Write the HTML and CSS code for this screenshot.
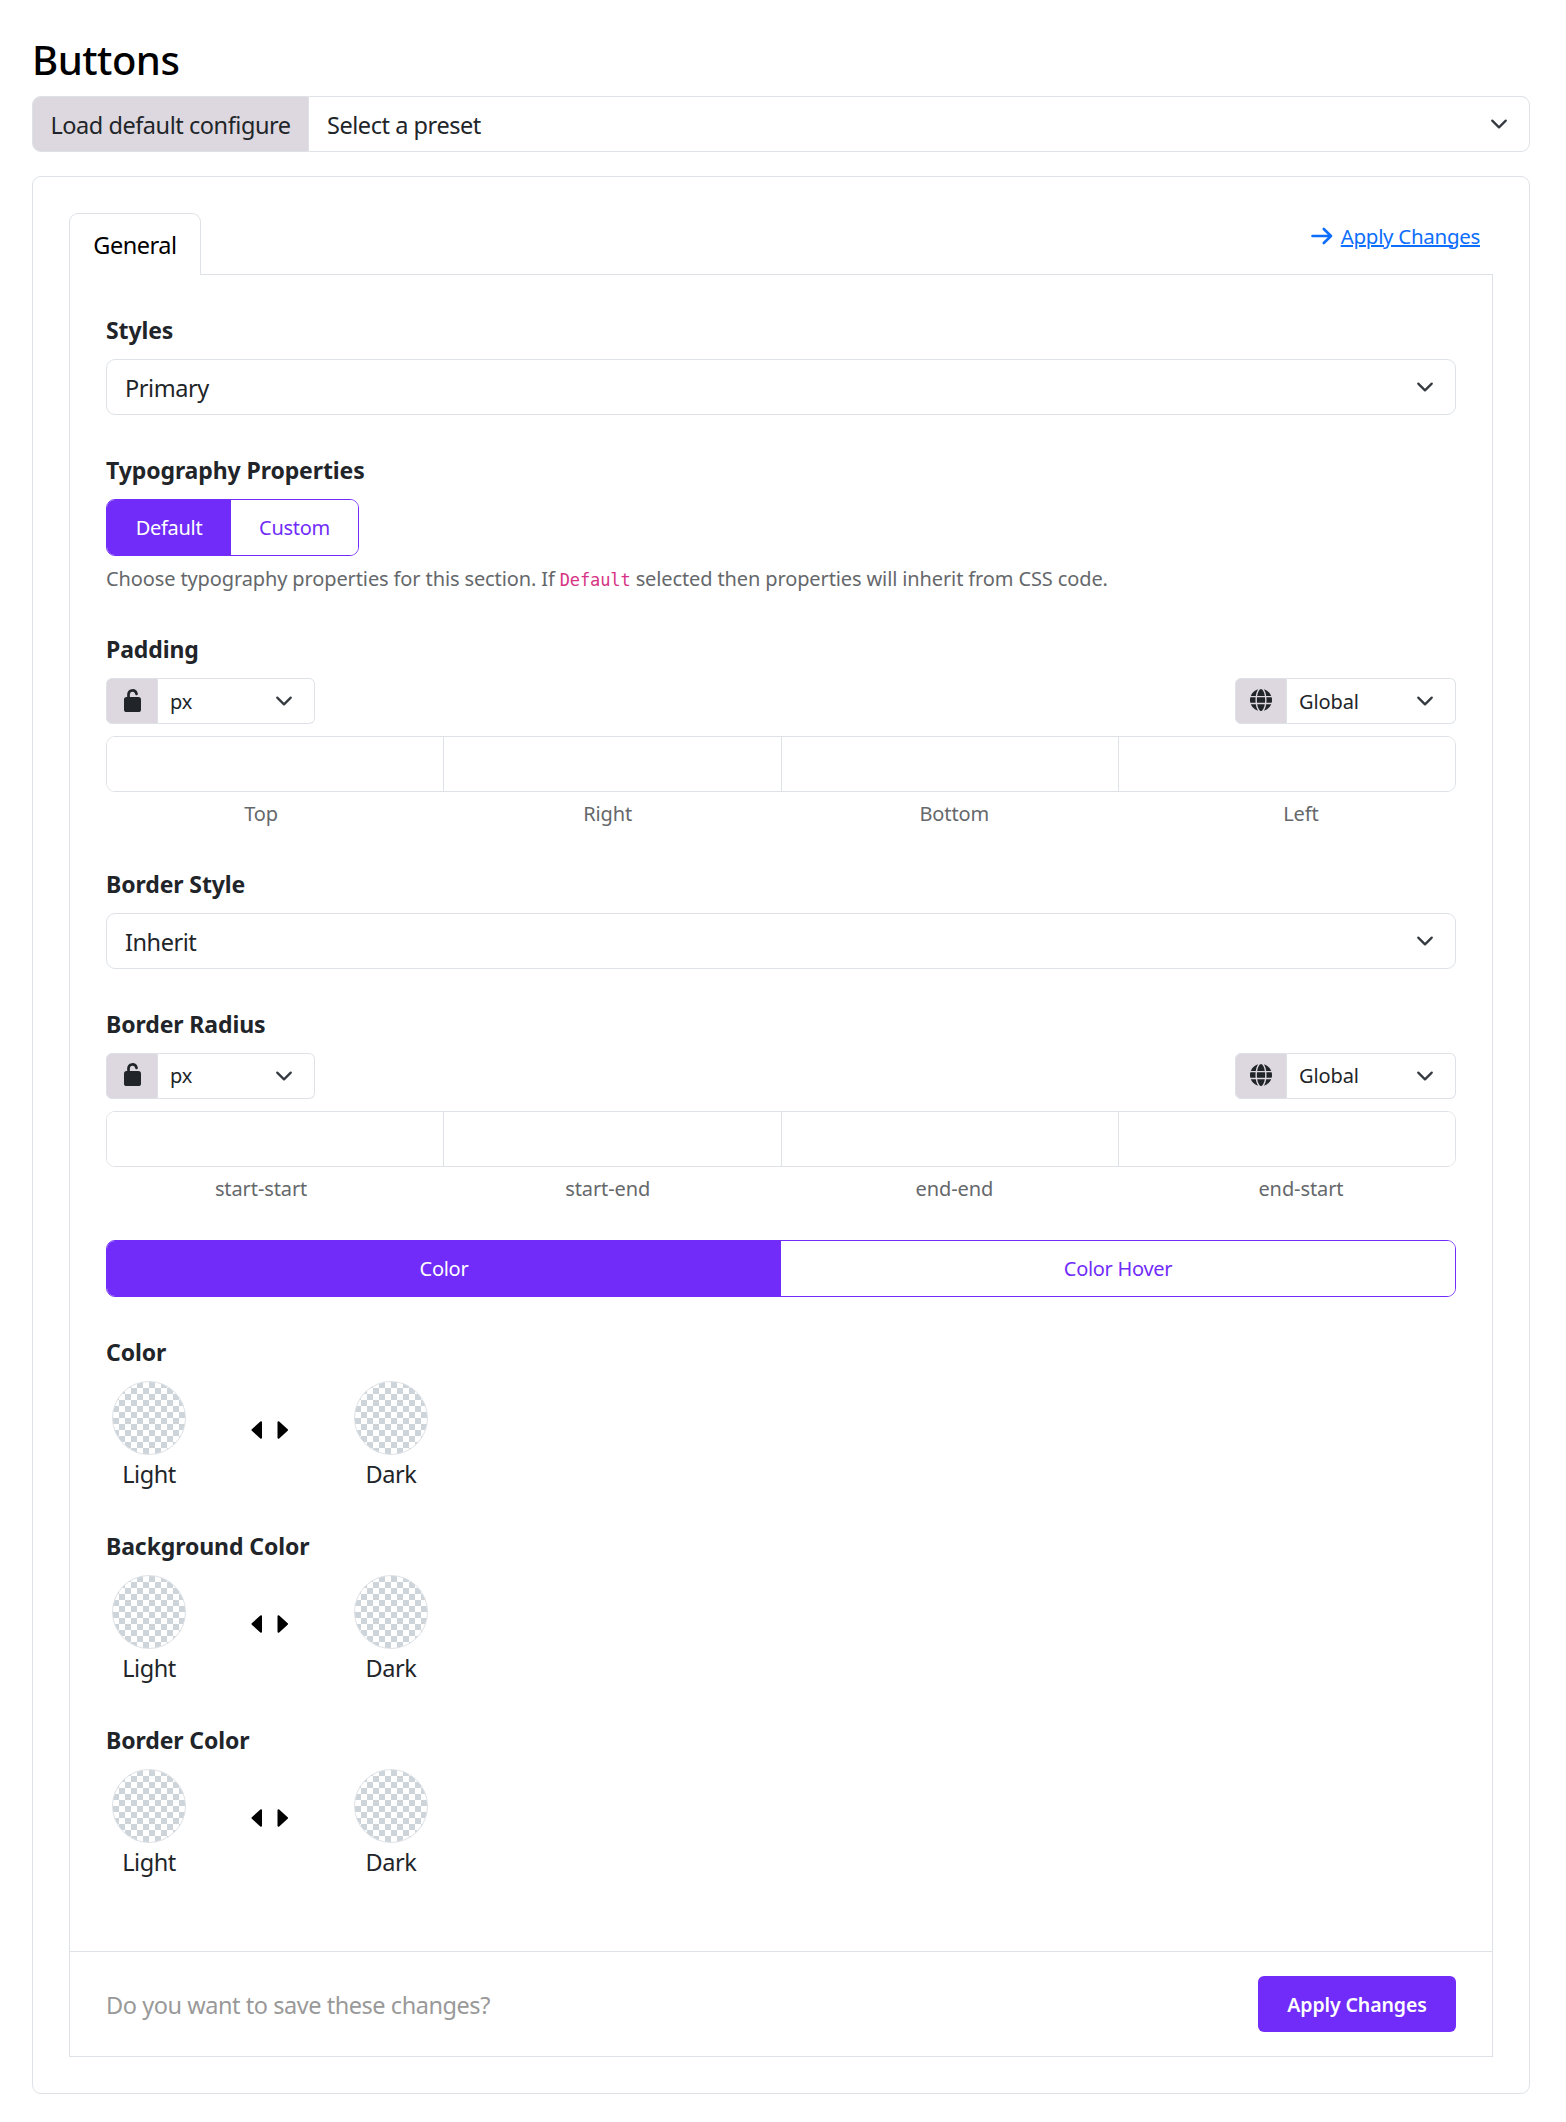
FILE: index.html
```
<!DOCTYPE html>
<html lang="en">
<head>
    <meta charset="utf-8">
    <title>Buttons</title>
    <link rel="stylesheet" href="styles.css">
</head>
<body>
    <svg width="0" height="0" class="sprite">
        <symbol id="icon-lock" viewBox="0 0 17 23">
            <path d="M4.500 9V5.400a4 4 0 0 1 7.800-1.200l.2.700" fill="none" stroke="currentColor" stroke-width="2.700" stroke-linecap="round"/>
            <rect x="0" y="8" width="17" height="15" rx="2.600" fill="currentColor"/>
        </symbol>
        <symbol id="icon-globe" viewBox="0 0 512 512">
            <path fill="currentColor" d="M352 256c0 22.200-1.200 43.600-3.300 64H163.300c-2.200-20.400-3.300-41.800-3.300-64s1.200-43.600 3.300-64h185.400c2.200 20.400 3.300 41.800 3.300 64zm28.800-64h123.100c5.300 20.500 8.100 41.900 8.100 64s-2.800 43.500-8.100 64H380.800c2.100-20.600 3.200-42 3.200-64s-1.100-43.400-3.200-64zm112.600-32H376.700c-10-63.900-29.800-117.400-55.300-151.600 78.300 20.700 142 77.500 171.900 151.600zm-149.100 0H167.700c6.100-36.400 15.500-68.600 27-94.700 10.500-23.600 22.200-40.700 33.500-51.500C239.400 3.200 248.700 0 256 0s16.600 3.200 27.800 13.800c11.300 10.800 23 27.900 33.500 51.500 11.600 26 20.900 58.200 27 94.700zm-209 0H18.600C48.600 85.900 112.200 29.100 190.600 8.400 165.100 42.600 145.300 96.100 135.300 160zM8.100 192h123.100c-2.100 20.600-3.200 42-3.200 64s1.100 43.400 3.200 64H8.100C2.800 299.500 0 278.100 0 256s2.800-43.500 8.100-64zm186.600 254.600c-11.600-26-20.900-58.200-27-94.600h176.600c-6.100 36.400-15.500 68.600-27 94.600-10.500 23.600-22.200 40.700-33.500 51.500C272.600 508.800 263.300 512 256 512s-16.600-3.200-27.800-13.800c-11.300-10.800-23-27.900-33.500-51.600zM135.300 352c10 63.900 29.800 117.400 55.300 151.600C112.200 482.900 48.600 426.100 18.600 352h116.700zm358.100 0c-30 74.100-93.600 130.900-171.900 151.600 25.500-34.200 45.200-87.700 55.300-151.600h116.600z"/>
        </symbol>
        <symbol id="icon-arrows" viewBox="0 0 38 18">
            <path d="M1.500 9L10 1.200V16.800zM36 9L27.500 1.200V16.800z" fill="currentColor" stroke="currentColor" stroke-width="2" stroke-linejoin="round"/>
        </symbol>
    </svg>

    <h2 class="page-title">Buttons</h2>
    <div class="input-group preset-group">
        <span class="input-group-text">Load default configure</span>
        <select class="form-select">
            <option>Select a preset</option>
        </select>
    </div>

    <div class="card">
        <div class="card-nav">
            <a class="nav-link active">General</a>
            <a class="apply-link">
                <svg width="22" height="18" viewBox="0 0 22 18"><path d="M1.500 9H20M12.800 2L20 9L12.800 16" fill="none" stroke="currentColor" stroke-width="2.600" stroke-linecap="round" stroke-linejoin="round"/></svg>
                <span>Apply Changes</span>
            </a>
        </div>

        <div class="tab-content">
            <div class="tab-body">
                <div class="form-row">
                    <label class="form-label">Styles</label>
                    <select class="form-select">
                        <option>Primary</option>
                    </select>
                </div>

                <div class="form-row">
                    <label class="form-label">Typography Properties</label>
                    <div class="btn-group">
                        <button class="btn active">Default</button>
                        <button class="btn">Custom</button>
                    </div>
                    <div class="form-text">Choose typography properties for this section. If <code>Default</code> selected then properties will inherit from CSS code.</div>
                </div>

                <div class="form-row">
                    <label class="form-label">Padding</label>
                    <div class="unit-bar">
                        <div class="input-group input-group-sm unit">
                            <span class="input-group-text"><svg width="17" height="23"><use href="#icon-lock"/></svg></span>
                            <select class="form-select"><option>px</option></select>
                        </div>
                        <div class="input-group input-group-sm device">
                            <span class="input-group-text"><svg width="22" height="22"><use href="#icon-globe"/></svg></span>
                            <select class="form-select"><option>Global</option></select>
                        </div>
                    </div>
                    <div class="sides">
                        <input type="text"><input type="text"><input type="text"><input type="text">
                    </div>
                    <div class="side-labels">
                        <span>Top</span><span>Right</span><span>Bottom</span><span>Left</span>
                    </div>
                </div>

                <div class="form-row">
                    <label class="form-label">Border Style</label>
                    <select class="form-select">
                        <option>Inherit</option>
                    </select>
                </div>

                <div class="form-row">
                    <label class="form-label">Border Radius</label>
                    <div class="unit-bar">
                        <div class="input-group input-group-sm unit">
                            <span class="input-group-text"><svg width="17" height="23"><use href="#icon-lock"/></svg></span>
                            <select class="form-select"><option>px</option></select>
                        </div>
                        <div class="input-group input-group-sm device">
                            <span class="input-group-text"><svg width="22" height="22"><use href="#icon-globe"/></svg></span>
                            <select class="form-select"><option>Global</option></select>
                        </div>
                    </div>
                    <div class="sides">
                        <input type="text"><input type="text"><input type="text"><input type="text">
                    </div>
                    <div class="side-labels">
                        <span>start-start</span><span>start-end</span><span>end-end</span><span>end-start</span>
                    </div>
                </div>

                <div class="btn-group btn-group-full">
                    <button class="btn active">Color</button>
                    <button class="btn">Color Hover</button>
                </div>

                <div class="form-row">
                    <label class="form-label">Color</label>
                    <div class="color-pair">
                        <div class="swatch"><i></i><span>Light</span></div>
                        <svg class="swap" width="38" height="18"><use href="#icon-arrows"/></svg>
                        <div class="swatch"><i></i><span>Dark</span></div>
                    </div>
                </div>

                <div class="form-row">
                    <label class="form-label">Background Color</label>
                    <div class="color-pair">
                        <div class="swatch"><i></i><span>Light</span></div>
                        <svg class="swap" width="38" height="18"><use href="#icon-arrows"/></svg>
                        <div class="swatch"><i></i><span>Dark</span></div>
                    </div>
                </div>

                <div class="form-row">
                    <label class="form-label">Border Color</label>
                    <div class="color-pair">
                        <div class="swatch"><i></i><span>Light</span></div>
                        <svg class="swap" width="38" height="18"><use href="#icon-arrows"/></svg>
                        <div class="swatch"><i></i><span>Dark</span></div>
                    </div>
                </div>
            </div>

            <div class="tab-footer">
                <span class="question">Do you want to save these changes?</span>
                <button class="btn-save">Apply Changes</button>
            </div>
        </div>
    </div>
</body>
</html>
```
FILE: styles.css
```
* {
    margin: 0;
    padding: 0;
    box-sizing: border-box;
}

body {
    padding: 36px 36px 28px 32px;
    font-family: "Noto Sans", "Open Sans", sans-serif;
    font-size: 23.5px;
    letter-spacing: -0.45px;
    line-height: 36px;
    color: #212529;
    background: #fff;
}

.sprite {
    position: absolute;
}

svg {
    display: block;
    flex: none;
}

.page-title {
    font-size: 40px;
    font-weight: 500;
    letter-spacing: -0.5px;
    line-height: 48px;
    color: #000;
    margin-bottom: 12px;
}

.input-group {
    display: flex;
}

.input-group-text {
    display: flex;
    align-items: center;
    justify-content: center;
    width: 277px;
    padding-top: 2px;
    border: 1px solid #dee2e6;
    border-radius: 9px 0 0 9px;
    background: #ddd8df;
    white-space: nowrap;
}

.form-select {
    display: block;
    width: 100%;
    height: 56px;
    padding: 2px 54px 0 18px;
    border: 1px solid #dee2e6;
    border-radius: 9px;
    appearance: none;
    font: inherit;
    letter-spacing: inherit;
    color: inherit;
    background: #fff url("data:image/svg+xml,%3csvg xmlns='http://www.w3.org/2000/svg' viewBox='0 0 16 16'%3e%3cpath fill='none' stroke='%23343a40' stroke-linecap='round' stroke-linejoin='round' stroke-width='2' d='m2 5 6 6 6-6'/%3e%3c/svg%3e") no-repeat right 21px center / 18px 18px;
}

.input-group .form-select {
    flex: 1;
    width: auto;
    border-left: 0;
    border-radius: 0 9px 9px 0;
}

.preset-group {
    margin-bottom: 24px;
}

.card {
    border: 1px solid #dee2e6;
    border-radius: 9px;
    padding: 36px;
    height: 1918px;
}

.card-nav {
    display: flex;
    justify-content: space-between;
    align-items: flex-start;
    height: 61px;
}

.nav-link {
    position: relative;
    z-index: 1;
    height: 62px;
    width: 132px;
    padding-top: 13px;
    text-align: center;
    color: #000;
    border: 1px solid #dee2e6;
    border-bottom: 0;
    border-radius: 9px 9px 0 0;
    background: #fff;
}

.apply-link {
    display: flex;
    align-items: center;
    gap: 8px;
    padding: 5px 13px 0 0;
    font-size: 20.5px;
    letter-spacing: -0.3px;
    color: #0d6efd;
}

.apply-link span {
    text-decoration: underline;
    text-decoration-thickness: 2px;
}

.tab-content {
    border: 1px solid #dee2e6;
}

.tab-body {
    display: flex;
    flex-direction: column;
    gap: 37px;
    height: 1676px;
    padding: 37px 36px 0;
}

.form-label {
    display: block;
    margin-bottom: 11px;
    font-size: 23px;
    font-weight: 700;
    letter-spacing: -0.1px;
}

.btn-group {
    display: flex;
    width: 253px;
    height: 57px;
    border: 1px solid #712cf9;
    border-radius: 9px;
    overflow: hidden;
}

.btn {
    flex: 1;
    border: 0;
    font-family: inherit;
    font-size: 20px;
    letter-spacing: -0.3px;
    color: #712cf9;
    background: #fff;
}

.btn.active {
    flex: 0 0 124px;
    color: #fff;
    background: #712cf9;
}

.btn-group-full {
    width: 100%;
}

.btn-group-full .btn.active {
    flex: 1;
}

.form-text {
    margin-top: 7px;
    line-height: 31px;
    font-size: 20px;
    letter-spacing: -0.12px;
    color: #65686b;
    white-space: nowrap;
}

.form-text code {
    font-family: "DejaVu Sans Mono", monospace;
    font-size: 17px;
    line-height: 1;
    color: #d63384;
}

.unit-bar {
    display: flex;
    justify-content: space-between;
    margin-bottom: 12px;
}

.input-group-sm {
    height: 46px;
    font-size: 20px;
    letter-spacing: -0.1px;
}

.unit {
    width: 209px;
}

.device {
    width: 221px;
}

.input-group-sm .input-group-text {
    width: 52px;
    padding: 0 0 2px;
    border-radius: 6px 0 0 6px;
}

.input-group-sm .form-select {
    height: 46px;
    padding: 1px 50px 0 12px;
    border-radius: 0 6px 6px 0;
}

.sides {
    display: flex;
    height: 56px;
    border: 1px solid #dee2e6;
    border-radius: 9px;
    overflow: hidden;
}

.sides input {
    flex: 1;
    width: 0;
    border: 0;
    background: #fff;
}

.sides input + input {
    border-left: 1px solid #dee2e6;
}

.side-labels {
    display: grid;
    grid-template-columns: repeat(4, 1fr);
    gap: 36.5px;
    margin-top: 7px;
    line-height: 29.5px;
    font-size: 20px;
    letter-spacing: -0.1px;
    text-align: center;
    color: #65686b;
}

.color-pair {
    display: flex;
    height: 110px;
    padding-left: 6px;
}

.swatch {
    display: flex;
    flex-direction: column;
    align-items: center;
    gap: 1px;
    width: 74px;
}

.swatch i {
    flex: none;
    width: 74px;
    height: 74px;
    border: 1px solid #dee2e6;
    border-radius: 50%;
    background: repeating-conic-gradient(#fff 0 25%, #cdd5db 0 50%) 0 0 / 12px 12px;
}

.swap {
    margin: 40px 65px 0;
    color: #000;
}

.tab-footer {
    display: flex;
    align-items: center;
    justify-content: space-between;
    height: 105px;
    padding: 0 36px;
    border-top: 1px solid #dee2e6;
}

.question {
    padding-top: 2px;
    color: #999;
}

.btn-save {
    width: 198px;
    height: 56px;
    padding-top: 1px;
    border: 0;
    border-radius: 6px;
    font-family: inherit;
    font-size: 19.5px;
    font-weight: 600;
    letter-spacing: -0.1px;
    color: #fff;
    background: #712cf9;
}
```
